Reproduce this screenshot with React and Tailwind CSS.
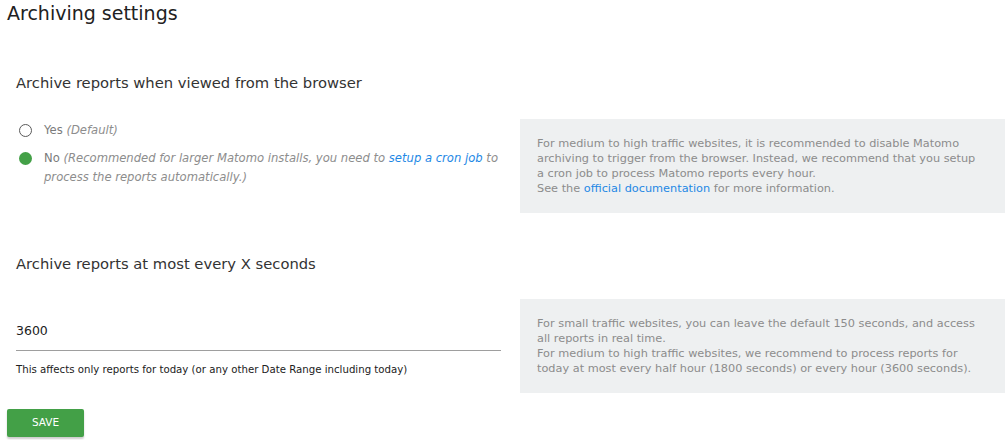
export default function App() {
  const font = { fontFamily: '"DejaVu Sans", Verdana, sans-serif' };
  return (
    <div className="w-[1008px] h-[440px] bg-white pl-[7px] overflow-hidden" style={font}>
      <h2 className="text-[19px] leading-[26px] h-[26px] text-[#212121]">Archiving settings</h2>

      <h3 className="mt-[47px] ml-[9px] text-[14.75px] leading-[20px] text-[#333333]">
        Archive reports when viewed from the browser
      </h3>
      <div className="mt-[26px] ml-[9px] grid grid-cols-[485px_485px] gap-x-[19px]">
        <div className="pt-[2px] text-[11.6px] leading-[19px] text-[#7b7b7b]">
          <div className="flex items-start">
            <span className="mt-[3px] ml-[3px] w-[13px] h-[13px] rounded-full border-[1.5px] border-[#5a5a5a] shrink-0" />
            <span className="ml-[12px] whitespace-nowrap">
              Yes <i className="text-[#8d8d8d]">(Default)</i>
            </span>
          </div>
          <div className="flex items-start mt-[9px]">
            <span className="mt-[3px] ml-[3px] w-[13px] h-[13px] rounded-full bg-[#43a047] shrink-0" />
            <span className="ml-[12px] whitespace-nowrap">
              No{' '}
              <i className="text-[#8d8d8d]">
                (Recommended for larger Matomo installs, you need to{' '}
                <a className="text-[#1e88e5]">setup a cron job</a> to
                <br />
                process the reports automatically.)
              </i>
            </span>
          </div>
        </div>
        <div className="bg-[#eef0f1] h-[94px] px-[17px] py-[17px] text-[11.3px] leading-[15px] text-[#8c8c8c] whitespace-nowrap">
          For medium to high traffic websites, it is recommended to disable Matomo
          <br />
          archiving to trigger from the browser. Instead, we recommend that you setup
          <br />
          a cron job to process Matomo reports every hour.
          <br />
          See the <a className="text-[#1e88e5]">official documentation</a> for more information.
        </div>
      </div>

      <h3 className="mt-[41px] ml-[9px] text-[14.75px] leading-[20px] text-[#333333]">
        Archive reports at most every X seconds
      </h3>
      <div className="mt-[25px] ml-[9px] grid grid-cols-[485px_485px] gap-x-[19px]">
        <div className="pt-[11px]">
          <div className="h-[41px] border-b border-[#9e9e9e] flex items-center pt-[3px] text-[12.5px] text-[#212121]">
            3600
          </div>
          <div className="mt-[12px] text-[10.2px] leading-[14px] text-[#212121] whitespace-nowrap">
            This affects only reports for today (or any other Date Range including today)
          </div>
        </div>
        <div className="bg-[#eef0f1] h-[94px] px-[17px] py-[17px] text-[11.3px] leading-[15px] text-[#8c8c8c] whitespace-nowrap">
          For small traffic websites, you can leave the default 150 seconds, and access
          <br />
          all reports in real time.
          <br />
          For medium to high traffic websites, we recommend to process reports for
          <br />
          today at most every half hour (1800 seconds) or every hour (3600 seconds).
        </div>
      </div>

      <button className="mt-[16px] w-[77px] h-[28px] bg-[#43a047] rounded-[2px] text-white text-[10.5px] uppercase shadow-[0_2px_2px_rgba(0,0,0,0.2)] flex items-center justify-center">
        Save
      </button>
    </div>
  );
}
